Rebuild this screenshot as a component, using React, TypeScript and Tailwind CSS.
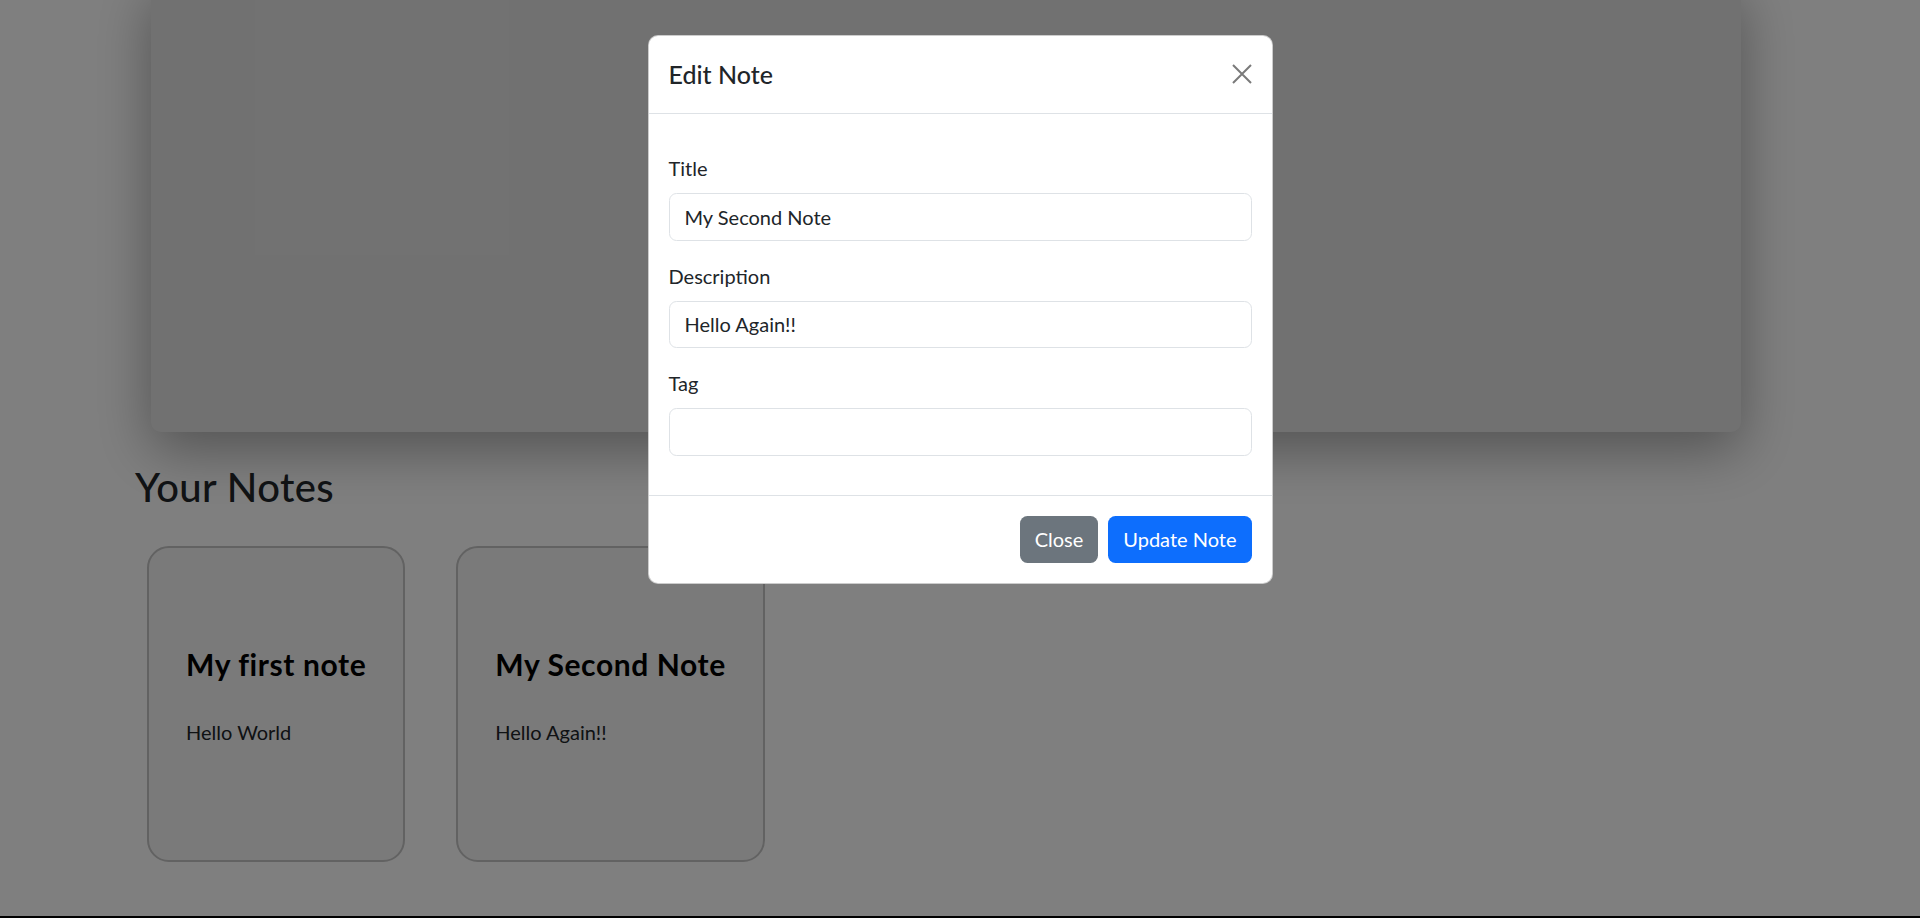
import React from 'react';

const notes = [
  { title: 'My first note', description: 'Hello World' },
  { title: 'My Second Note', description: 'Hello Again!!' },
];

const NoteCard = ({ title, description }: { title: string; description: string }) => (
  <div className="border-2 border-[#c4c4c4] bg-[#f4f4f4] rounded-[22px] px-[37px] pt-[98px] pb-[113px]">
    <h4 className="text-[30px] leading-[36px] font-bold tracking-[0.6px] text-black whitespace-nowrap">{title}</h4>
    <p className="mt-[35px] text-[20px] leading-[30px] text-[#212529]">{description}</p>
  </div>
);

const Field = ({ label, value }: { label: string; value: string }) => (
  <div>
    <label className="block text-[20px] leading-[30px] mb-[10px] text-[#212529]">{label}</label>
    <input
      type="text"
      defaultValue={value}
      className="w-full h-[47.5px] px-[15px] border border-[#dee2e6] rounded-[7.5px] text-[20px] text-[#212529] bg-white focus:outline-none"
    />
  </div>
);

export default function App() {
  return (
    <div className="relative h-[918px] overflow-hidden bg-white font-['Lato','Noto_Sans',sans-serif] text-[#212529]">
      <div className="flex h-full flex-col">
        {/* Page */}
        <main className="flex-1 pl-[135px]">
          <div className="ml-[16px] -mt-[20px] w-[1590px] h-[452px] rounded-[10px] bg-[#e3e3e3] shadow-[0_18px_55px_rgba(0,0,0,0.35)]"></div>

          <h2 className="mt-[31px] text-[40px] leading-[48px] font-medium tracking-[0.4px]">Your Notes</h2>

          <div className="mt-[35px] ml-[12px] flex items-start gap-[51px]">
            {notes.map((note) => (
              <NoteCard key={note.title} title={note.title} description={note.description} />
            ))}
          </div>
        </main>
        <div className="h-[2px] bg-black"></div>
      </div>

      {/* Modal */}
      <div className="absolute inset-0 bg-black/50 flex justify-center items-start pt-[35px]">
        <div className="w-[625px] bg-white border border-black/20 rounded-[10px] overflow-hidden">
          <div className="flex items-center justify-between px-[20px] py-[19.5px] border-b border-[#dee2e6]">
            <h5 className="text-[25px] leading-[37.5px] font-medium text-[#212529]">Edit Note</h5>
            <button type="button" className="w-[20px] h-[20px] flex items-center justify-center">
              <svg viewBox="0 0 20 20" className="w-[20px] h-[20px]">
                <path d="M1 1L19 19M19 1L1 19" stroke="#7a7a7a" strokeWidth="2" fill="none" />
              </svg>
            </button>
          </div>

          <div className="px-[20px] pt-[39.5px] pb-[39px] flex flex-col gap-[20px]">
            <Field label="Title" value="My Second Note" />
            <Field label="Description" value="Hello Again!!" />
            <Field label="Tag" value="" />
          </div>

          <div className="border-t border-[#dee2e6] p-[20px] flex justify-end gap-[10px]">
            <button className="h-[47.5px] px-[15px] rounded-[7.5px] bg-[#6c757d] text-white text-[20px]">Close</button>
            <button className="h-[47.5px] px-[15px] rounded-[7.5px] bg-[#0d6efd] text-white text-[20px]">Update Note</button>
          </div>
        </div>
      </div>
    </div>
  );
}
